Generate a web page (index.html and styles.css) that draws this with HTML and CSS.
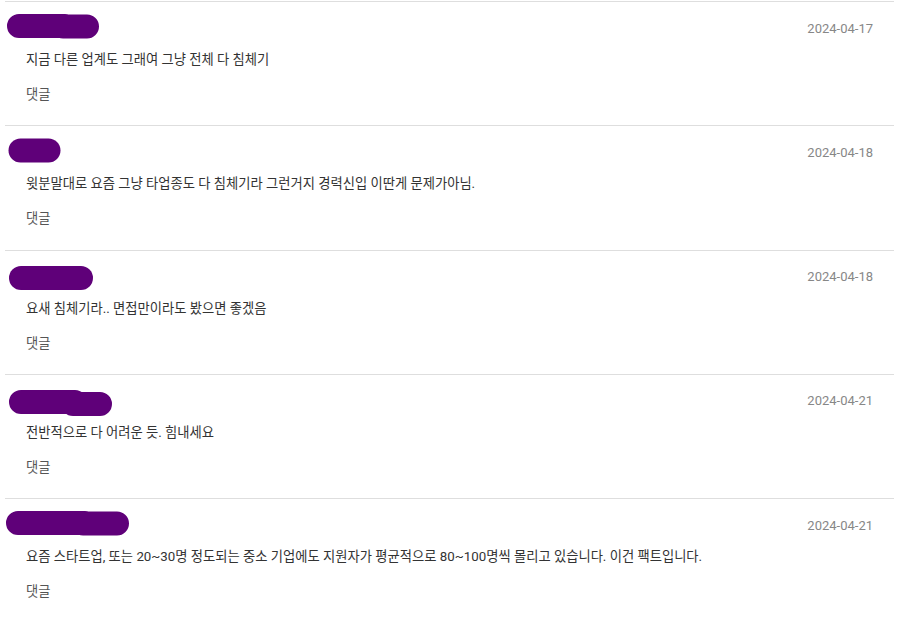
FILE: index.html
```html
<!DOCTYPE html>
<html lang="ko">
<head>
    <meta charset="UTF-8">
    <meta name="viewport" content="width=device-width, initial-scale=1.0">
    <title>댓글</title>
    <link rel="stylesheet" href="styles.css">
</head>
<body>
    <div class="comments">

        <div class="comment">
            <div class="comment-head">
                <svg class="mask" width="100" height="26" viewBox="0 0 100 26">
                    <path d="M14 11 L60 11 M58 11.5 L82 11.5" />
                </svg>
                <span class="date">2024-04-17</span>
            </div>
            <p class="text">지금 다른 업계도 그래여 그냥 전체 다 침체기</p>
            <a class="reply">댓글</a>
        </div>

        <div class="comment">
            <div class="comment-head">
                <svg class="mask" width="100" height="26" viewBox="0 0 100 26">
                    <path d="M15.5 11.5 L43.5 11.5" />
                </svg>
                <span class="date">2024-04-18</span>
            </div>
            <p class="text">윗분말대로 요즘 그냥 타업종도 다 침체기라 그런거지 경력신입 이딴게 문제가아님.</p>
            <a class="reply">댓글</a>
        </div>

        <div class="comment">
            <div class="comment-head">
                <svg class="mask" width="100" height="26" viewBox="0 0 100 26">
                    <path d="M16 14 L76 14" />
                </svg>
                <span class="date">2024-04-18</span>
            </div>
            <p class="text">요새 침체기라.. 면접만이라도 봤으면 좋겠음</p>
            <a class="reply">댓글</a>
        </div>

        <div class="comment">
            <div class="comment-head">
                <svg class="mask" width="120" height="26" viewBox="0 0 120 26">
                    <path d="M16 14 L70 14 M68 16 L95 16" />
                </svg>
                <span class="date">2024-04-21</span>
            </div>
            <p class="text">전반적으로 다 어려운 듯. 힘내세요</p>
            <a class="reply">댓글</a>
        </div>

        <div class="comment">
            <div class="comment-head">
                <svg class="mask" width="130" height="26" viewBox="0 0 130 26">
                    <path d="M13 11 L80 11 M78 11.5 L112 11.5" />
                </svg>
                <span class="date">2024-04-21</span>
            </div>
            <p class="text">요즘 스타트업, 또는 20~30명 정도되는 중소 기업에도 지원자가 평균적으로 80~100명씩 몰리고 있습니다. 이건 팩트입니다.</p>
            <a class="reply">댓글</a>
        </div>

    </div>
</body>
</html>
```

FILE: styles.css
```css
body {
    margin: 0;
    background: #fff;
    font-family: Roboto, "Noto Sans CJK KR", sans-serif;
    color: #333;
}

.comments {
    margin: 0 6px 0 5px;
    padding-top: 1px;
}

.comment {
    border-top: 1px solid #dedede;
    padding: 13px 21px 21px 0;
    height: 89.25px;
}

.comment-head {
    display: flex;
    justify-content: space-between;
    align-items: center;
    height: 26px;
}

.mask {
    display: block;
    overflow: visible;
}

.mask path {
    fill: none;
    stroke: #5f0079;
    stroke-width: 24;
    stroke-linecap: round;
}

.date {
    font-size: 13px;
    color: #878787;
}

.text {
    margin: 9px 0 0 21px;
    font-size: 13.3px;
    line-height: 20px;
    color: #333;
}

.reply {
    display: block;
    margin: 15px 0 0 21px;
    font-size: 13.3px;
    line-height: 20px;
    color: #555;
    cursor: pointer;
}
```
